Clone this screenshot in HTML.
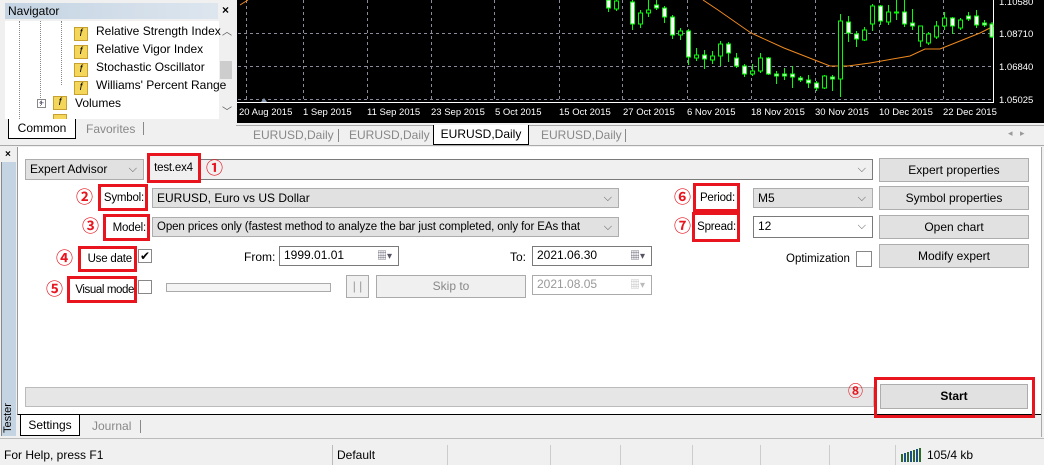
<!DOCTYPE html>
<html><head><meta charset="utf-8"><style>
*{margin:0;padding:0;box-sizing:border-box}
body{width:1044px;height:465px;overflow:hidden;background:#f0f0f0;font-family:"Liberation Sans","Noto Sans CJK JP",sans-serif;font-size:12px;color:#000;position:relative}
.a{position:absolute}
.box{position:absolute;border:1px solid #adadad;background:#e1e1e1}
.btn{position:absolute;border:1px solid #adadad;background:#e1e1e1;text-align:center;line-height:22px;font-size:12px}
.inp{position:absolute;border:1px solid #7a7a7a;background:#fff;padding-left:4px;line-height:17px}
.red{position:absolute;border:3px solid #e8141e;display:flex;align-items:center;justify-content:flex-end;padding-right:1px;font-size:11.5px;letter-spacing:-0.2px;white-space:nowrap}
.num{position:absolute;color:#e8141e;font-size:17px;font-weight:bold;line-height:18px}
.arr{position:absolute;right:6px;top:1px;font-size:11px;color:#555}
.lbl{position:absolute;font-size:12px}
</style></head><body>

<!-- Navigator -->
<div class="a" style="left:0;top:0;width:237px;height:143px;background:#f0f0f0"></div>
<div class="a" style="left:5px;top:3px;width:213px;height:16px;background:linear-gradient(90deg,#c4d3e2,#dde6ef);padding-left:3px;font-size:12px;line-height:16px">Navigator</div>
<div class="a" style="left:222px;top:3px;font-size:12px;font-weight:bold">×</div>
<div class="a" style="left:5px;top:21px;width:227px;height:98px;background:#fff;overflow:hidden;font-size:12px">
 <div class="a" style="left:214px;top:0;width:16px;height:98px;background:#f0f0f0"></div>
 <div class="a" style="left:215px;top:40px;width:14px;height:18px;background:#cdcdcd"></div>
 <div class="a" style="left:217px;top:2px;font-size:10px;color:#555">︿</div>
 <div class="a" style="left:217px;top:82px;font-size:10px;color:#555">﹀</div>
 <div class="a" style="left:14px;top:0;height:98px;border-left:1px dotted #888"></div>
 <div class="a" style="left:35px;top:0;height:85px;border-left:1px dotted #888"></div>
 <div class="a" style="left:56px;top:0;height:64px;border-left:1px dotted #888"></div>
 <div class="a" style="left:69px;top:6px;width:14px;height:14px;background:#f4d65a;border:1px solid #c8a030;font-size:10px;text-align:center;font-style:italic;line-height:12px">f</div>
 <div class="a" style="left:91px;top:3px;white-space:nowrap">Relative Strength Index</div>
 <div class="a" style="left:69px;top:24px;width:14px;height:14px;background:#f4d65a;border:1px solid #c8a030;font-size:10px;text-align:center;font-style:italic;line-height:12px">f</div>
 <div class="a" style="left:91px;top:21px">Relative Vigor Index</div>
 <div class="a" style="left:69px;top:42px;width:14px;height:14px;background:#f4d65a;border:1px solid #c8a030;font-size:10px;text-align:center;font-style:italic;line-height:12px">f</div>
 <div class="a" style="left:91px;top:39px">Stochastic Oscillator</div>
 <div class="a" style="left:69px;top:60px;width:14px;height:14px;background:#f4d65a;border:1px solid #c8a030;font-size:10px;text-align:center;font-style:italic;line-height:12px">f</div>
 <div class="a" style="left:91px;top:57px;white-space:nowrap">Williams' Percent Range</div>
 <div class="a" style="left:32px;top:78px;width:9px;height:9px;border:1px solid #888;font-size:9px;line-height:7px;text-align:center;color:#335">+</div>
 <div class="a" style="left:48px;top:75px;width:14px;height:14px;background:#f4d65a;border:1px solid #c8a030;font-size:10px;text-align:center;font-style:italic;line-height:12px">f</div>
 <div class="a" style="left:70px;top:75px">Volumes</div>
 <div class="a" style="left:48px;top:93px;width:14px;height:14px;background:#f4d65a;border:1px solid #c8a030"></div>
</div>
<div class="a" style="left:8px;top:119px;width:68px;height:20px;background:#fff;border:1px solid #000;border-top:none;text-align:center;line-height:18px">Common</div>
<div class="a" style="left:86px;top:122px;color:#888">Favorites</div>
<div class="a" style="left:143px;top:122px;height:13px;border-left:1px solid #888"></div>

<!-- Chart -->
<svg class="a" style="left:237px;top:0" width="807" height="123" viewBox="237 0 807 123">
<rect x="237" y="0" width="807" height="123" fill="#000"/>
<g stroke="#8a8a9a" stroke-dasharray="3,3" stroke-width="1">
<line x1="238" y1="33.5" x2="993" y2="33.5"/><line x1="238" y1="66.5" x2="993" y2="66.5"/><line x1="238" y1="99.5" x2="993" y2="99.5"/>
<line x1="246.5" y1="0" x2="246.5" y2="102"/><line x1="303.5" y1="0" x2="303.5" y2="102"/><line x1="367.5" y1="0" x2="367.5" y2="102"/><line x1="431.5" y1="0" x2="431.5" y2="102"/><line x1="494.5" y1="0" x2="494.5" y2="102"/><line x1="559.5" y1="0" x2="559.5" y2="102"/><line x1="622.5" y1="0" x2="622.5" y2="102"/><line x1="687.5" y1="0" x2="687.5" y2="102"/><line x1="751.5" y1="0" x2="751.5" y2="102"/><line x1="815.5" y1="0" x2="815.5" y2="102"/><line x1="879.5" y1="0" x2="879.5" y2="102"/><line x1="943.5" y1="0" x2="943.5" y2="102"/>
</g>
<line x1="993.5" y1="0" x2="993.5" y2="103" stroke="#fff"/>
<line x1="237" y1="102.5" x2="994" y2="102.5" stroke="#fff"/>
<polyline fill="none" stroke="#f08a1e" stroke-width="1" points="240,5 248,0"/>
<polyline fill="none" stroke="#f08a1e" stroke-width="1" points="703,0 718,10 751,33 784,48 830,66 848,66 870,63 910,56 925,49 940,49 960,41 980,33 994,26"/>
<g stroke="#00ff00" stroke-width="1">
<line x1="608.5" y1="0" x2="608.5" y2="12"/><rect x="606.5" y="0" width="4" height="8" fill="#fff"/>
<line x1="616.5" y1="0" x2="616.5" y2="11"/><rect x="614.5" y="1" width="4" height="8" fill="#000"/>
<line x1="632.5" y1="0" x2="632.5" y2="30"/><rect x="630.5" y="2" width="4" height="22" fill="#fff"/>
<line x1="640.5" y1="10" x2="640.5" y2="28"/><rect x="638.5" y="13" width="4" height="11" fill="#000"/>
<line x1="648.5" y1="0" x2="648.5" y2="17"/><rect x="646.5" y="10" width="4" height="3" fill="#000"/>
<line x1="656.5" y1="0" x2="656.5" y2="10"/><rect x="654.5" y="5" width="4" height="3" fill="#fff"/>
<line x1="664.5" y1="6" x2="664.5" y2="23"/><rect x="662.5" y="8" width="4" height="9" fill="#fff"/>
<line x1="672.5" y1="15" x2="672.5" y2="39"/><rect x="670.5" y="17" width="4" height="18" fill="#fff"/>
<line x1="680.5" y1="28" x2="680.5" y2="40"/><rect x="678.5" y="31" width="4" height="4" fill="#000"/>
<line x1="688.5" y1="29" x2="688.5" y2="65"/><rect x="686.5" y="31" width="4" height="26" fill="#fff"/>
<line x1="696.5" y1="48" x2="696.5" y2="61"/><rect x="694.5" y="55" width="4" height="3" fill="#000"/>
<line x1="704.5" y1="50" x2="704.5" y2="69"/><rect x="702.5" y="55" width="4" height="4" fill="#fff"/>
<line x1="712.5" y1="51" x2="712.5" y2="64"/><rect x="710.5" y="56" width="4" height="4" fill="#000"/>
<line x1="720.5" y1="41" x2="720.5" y2="66"/><rect x="718.5" y="44" width="4" height="12" fill="#000"/>
<line x1="728.5" y1="42" x2="728.5" y2="62"/><rect x="726.5" y="44" width="4" height="9" fill="#fff"/>
<line x1="736.5" y1="53" x2="736.5" y2="68"/><rect x="734.5" y="58" width="4" height="8" fill="#fff"/>
<line x1="744.5" y1="64" x2="744.5" y2="77"/><rect x="742.5" y="66" width="4" height="8" fill="#fff"/>
<line x1="752.5" y1="64" x2="752.5" y2="76"/><rect x="750.5" y="71" width="4" height="3" fill="#000"/>
<line x1="760.5" y1="53" x2="760.5" y2="73"/><rect x="758.5" y="58" width="4" height="13" fill="#000"/>
<line x1="768.5" y1="57" x2="768.5" y2="75"/><rect x="766.5" y="58" width="4" height="16" fill="#fff"/>
<line x1="776.5" y1="71" x2="776.5" y2="84"/><rect x="774.5" y="74" width="4" height="2" fill="#fff"/>
<line x1="784.5" y1="68" x2="784.5" y2="80"/><rect x="782.5" y="74" width="4" height="2" fill="#fff"/>
<line x1="792.5" y1="66" x2="792.5" y2="88"/><rect x="790.5" y="74" width="4" height="3" fill="#fff"/>
<line x1="800.5" y1="76" x2="800.5" y2="82"/><rect x="798.5" y="78" width="4" height="2" fill="#fff"/>
<line x1="808.5" y1="75" x2="808.5" y2="88"/><rect x="806.5" y="80" width="4" height="3" fill="#fff"/>
<line x1="816.5" y1="81" x2="816.5" y2="91"/><rect x="814.5" y="83" width="4" height="5" fill="#fff"/>
<line x1="824.5" y1="75" x2="824.5" y2="89"/><rect x="822.5" y="76" width="4" height="12" fill="#000"/>
<line x1="832.5" y1="75" x2="832.5" y2="91"/><rect x="830.5" y="77" width="4" height="2" fill="#fff"/>
<line x1="840.5" y1="14" x2="840.5" y2="97"/><rect x="838.5" y="21" width="4" height="58" fill="#000"/>
<line x1="848.5" y1="16" x2="848.5" y2="42"/><rect x="846.5" y="22" width="4" height="11" fill="#fff"/>
<line x1="856.5" y1="31" x2="856.5" y2="47"/><rect x="854.5" y="34" width="4" height="5" fill="#fff"/>
<line x1="864.5" y1="27" x2="864.5" y2="41"/><rect x="862.5" y="30" width="4" height="10" fill="#000"/>
<line x1="872.5" y1="4" x2="872.5" y2="31"/><rect x="870.5" y="6" width="4" height="18" fill="#000"/>
<line x1="880.5" y1="5" x2="880.5" y2="25"/><rect x="878.5" y="6" width="4" height="15" fill="#fff"/>
<line x1="888.5" y1="5" x2="888.5" y2="25"/><rect x="886.5" y="12" width="4" height="10" fill="#000"/>
<line x1="896.5" y1="0" x2="896.5" y2="20"/><rect x="894.5" y="12" width="4" height="1" fill="#fff"/>
<line x1="904.5" y1="0" x2="904.5" y2="27"/><rect x="902.5" y="12" width="4" height="12" fill="#fff"/>
<line x1="912.5" y1="9" x2="912.5" y2="30"/><rect x="910.5" y="23" width="4" height="3" fill="#fff"/>
<line x1="920.5" y1="26" x2="920.5" y2="47"/><rect x="918.5" y="26" width="4" height="15" fill="#000"/>
<line x1="928.5" y1="32" x2="928.5" y2="45"/><rect x="926.5" y="34" width="4" height="9" fill="#000"/>
<line x1="936.5" y1="21" x2="936.5" y2="39"/><rect x="934.5" y="26" width="4" height="11" fill="#000"/>
<line x1="944.5" y1="12" x2="944.5" y2="30"/><rect x="942.5" y="18" width="4" height="8" fill="#000"/>
<line x1="952.5" y1="17" x2="952.5" y2="34"/><rect x="950.5" y="18" width="4" height="8" fill="#fff"/>
<line x1="960.5" y1="18" x2="960.5" y2="30"/><rect x="958.5" y="20" width="4" height="8" fill="#000"/>
<line x1="968.5" y1="12" x2="968.5" y2="21"/><rect x="966.5" y="16" width="4" height="3" fill="#fff"/>
<line x1="976.5" y1="10" x2="976.5" y2="28"/><rect x="974.5" y="16" width="4" height="9" fill="#fff"/>
<line x1="984.5" y1="20" x2="984.5" y2="27"/><rect x="982.5" y="23" width="4" height="2" fill="#fff"/>
<line x1="992" y1="22" x2="992" y2="38"/><rect x="990" y="24" width="3" height="13" fill="#fff"/>
</g>
<g fill="#fff" font-family="Liberation Sans, sans-serif" font-size="9.5">
<text x="999" y="5">1.10580</text><text x="999" y="37">1.08710</text><text x="999" y="70">1.06840</text><text x="999" y="103">1.05025</text>
<text x="239" y="115">20 Aug 2015</text><text x="303" y="115">1 Sep 2015</text><text x="367" y="115">11 Sep 2015</text><text x="431" y="115">23 Sep 2015</text><text x="495" y="115">5 Oct 2015</text><text x="559" y="115">15 Oct 2015</text><text x="623" y="115">27 Oct 2015</text><text x="687" y="115">6 Nov 2015</text><text x="751" y="115">18 Nov 2015</text><text x="815" y="115">30 Nov 2015</text><text x="879" y="115">10 Dec 2015</text><text x="943" y="115">22 Dec 2015</text>
</g>
<polygon points="261,102 264,98 267,102" fill="#8a9ab0"/>
</svg>

<!-- chart tabs -->
<div class="a" style="left:236px;top:125px;width:808px;height:19px;background:#f0f0f0;border-top:1px solid #aaa"></div>
<div class="a" style="left:253px;top:128px;color:#888">EURUSD,Daily</div>
<div class="a" style="left:338px;top:129px;height:13px;border-left:1px solid #888"></div>
<div class="a" style="left:349px;top:128px;color:#888">EURUSD,Daily</div>
<div class="a" style="left:433px;top:125px;width:96px;height:20px;background:#fff;border:1px solid #000;border-top:none;text-align:center;line-height:19px">EURUSD,Daily</div>
<div class="a" style="left:541px;top:128px;color:#888">EURUSD,Daily</div>
<div class="a" style="left:625px;top:129px;height:13px;border-left:1px solid #888"></div>
<div class="a" style="left:1008px;top:128px;color:#999;font-size:9px">◂ &nbsp; ▸</div>

<!-- Tester panel -->
<div class="a" style="left:0;top:145px;width:1044px;height:2px;border-top:1px solid #aaa"></div>
<div class="a" style="left:5px;top:149px;font-size:10px;font-weight:bold">×</div>
<div class="a" style="left:1px;top:162px;width:15px;height:274px;background:#c5d4e2;border-left:1px solid #888"></div>
<div class="a" style="left:1px;top:400px;width:15px;height:36px;font-size:11px;writing-mode:vertical-rl;transform:rotate(180deg);line-height:15px;text-align:center">Tester</div>
<div class="a" style="left:17px;top:147px;width:1024px;height:268px;background:#fff;border-left:1px solid #999;border-bottom:1px solid #000"></div>
<div class="a" style="left:1041px;top:147px;width:3px;height:290px;border-left:1px solid #aaa"></div>

<div class="box" style="left:25px;top:159px;width:119px;height:21px;padding-left:4px;line-height:19px">Expert Advisor<span class="arr" style="top:0">⌵</span></div>
<div class="inp" style="left:148px;top:159px;width:725px;height:21px;background:#f0f0f0;border-color:#7a7a7a;line-height:19px">&nbsp;<span class="arr" style="top:0">⌵</span></div>
<div class="red" style="left:147px;top:153px;width:54px;height:30px;background:#f0f0f0;justify-content:center">test.ex4</div>
<div class="num" style="left:206px;top:160px">①</div>

<div class="red" style="left:98px;top:184px;width:50px;height:27px">Symbol:</div>
<div class="num" style="left:76px;top:189px">②</div>
<div class="box" style="left:152px;top:188px;width:467px;height:20px;padding-left:4px;line-height:18px">EURUSD, Euro vs US Dollar<span class="arr" style="top:0">⌵</span></div>

<div class="red" style="left:103px;top:214px;width:47px;height:27px">Model:</div>
<div class="num" style="left:82px;top:218px">③</div>
<div class="box" style="left:152px;top:217px;width:467px;height:20px;padding-left:4px;line-height:18px;white-space:nowrap;overflow:hidden;font-size:11.5px;letter-spacing:-0.1px">Open prices only (fastest method to analyze the bar just completed, only for EAs that<span class="arr" style="top:0;background:#e1e1e1;padding-left:3px;right:0;padding-right:6px">⌵</span></div>

<div class="red" style="left:78px;top:246px;width:59px;height:26px;padding-right:2px">Use date</div>
<div class="num" style="left:56px;top:250px">④</div>
<div class="a" style="left:138px;top:249px;width:14px;height:14px;border:1px solid #888;font-size:12px;line-height:12px;text-align:center">✔</div>
<div class="lbl" style="left:244px;top:250px">From:</div>
<div class="inp" style="left:279px;top:246px;width:120px;height:20px">1999.01.01<span class="arr" style="color:#556;font-size:10px">▦▾</span></div>
<div class="lbl" style="left:510px;top:250px">To:</div>
<div class="inp" style="left:532px;top:246px;width:120px;height:20px">2021.06.30<span class="arr" style="color:#556;font-size:10px">▦▾</span></div>

<div class="red" style="left:67px;top:276px;width:70px;height:27px;font-size:11.5px;letter-spacing:-0.4px;padding-right:0">Visual mode</div>
<div class="num" style="left:46px;top:281px">⑤</div>
<div class="a" style="left:138px;top:280px;width:14px;height:14px;border:1px solid #888"></div>
<div class="a" style="left:166px;top:283px;width:165px;height:9px;border:1px solid #aaa;background:#f4f4f4"></div>
<div class="a" style="left:346px;top:275px;width:23px;height:23px;border:1px solid #aaa;background:#f0f0f0;color:#999;text-align:center;line-height:20px">| |</div>
<div class="a" style="left:376px;top:275px;width:150px;height:23px;border:1px solid #aaa;background:#f0f0f0;color:#888;text-align:center;line-height:21px">Skip to</div>
<div class="inp" style="left:532px;top:275px;width:120px;height:20px;border-color:#aaa;color:#999">2021.08.05<span class="arr" style="color:#bbb;font-size:10px">▦▾</span></div>

<div class="red" style="left:693px;top:183px;width:47px;height:29px;padding-right:2px">Period:</div>
<div class="num" style="left:674px;top:189px">⑥</div>
<div class="box" style="left:753px;top:188px;width:120px;height:20px;padding-left:4px;line-height:18px">M5<span class="arr" style="top:0">⌵</span></div>
<div class="red" style="left:692px;top:212px;width:48px;height:30px;padding-right:1px">Spread:</div>
<div class="num" style="left:674px;top:218px">⑦</div>
<div class="inp" style="left:753px;top:216px;width:120px;height:22px;line-height:19px">12<span class="arr" style="top:0">⌵</span></div>
<div class="lbl" style="left:786px;top:253px;font-size:11.5px">Optimization</div>
<div class="a" style="left:856px;top:251px;width:16px;height:16px;border:1px solid #888;background:#fff"></div>

<div class="btn" style="left:879px;top:158px;width:150px;height:24px">Expert properties</div>
<div class="btn" style="left:879px;top:186px;width:150px;height:24px">Symbol properties</div>
<div class="btn" style="left:879px;top:215px;width:150px;height:24px">Open chart</div>
<div class="btn" style="left:879px;top:244px;width:150px;height:24px">Modify expert</div>

<div class="a" style="left:25px;top:387px;width:849px;height:20px;border:1px solid #bbb;background:#e6e6e6"></div>
<div class="num" style="left:848px;top:383px;font-size:15px">⑧</div>
<div class="btn" style="left:880px;top:384px;width:148px;height:25px;font-weight:bold;line-height:23px">Start</div>
<div class="red" style="left:874px;top:377px;width:161px;height:41px"></div>

<div class="a" style="left:20px;top:415px;width:60px;height:21px;background:#fff;border:1px solid #000;border-top:none;text-align:center;line-height:20px">Settings</div>
<div class="a" style="left:92px;top:419px;color:#888">Journal</div>
<div class="a" style="left:140px;top:420px;height:13px;border-left:1px solid #888"></div>

<!-- status bar -->
<div class="a" style="left:0;top:438px;width:1044px;height:27px;background:#f0f0f0;border-top:1px solid #bbb"></div>
<div class="a" style="left:4px;top:448px">For Help, press F1</div>
<div class="a" style="left:332px;top:445px;height:20px;border-left:1px solid #bbb"></div>
<div class="a" style="left:337px;top:448px">Default</div>
<div class="a" style="left:447px;top:445px;height:20px;border-left:1px solid #ccc"></div>
<div class="a" style="left:550px;top:445px;height:20px;border-left:1px solid #ccc"></div>
<div class="a" style="left:620px;top:445px;height:20px;border-left:1px solid #ccc"></div>
<div class="a" style="left:692px;top:445px;height:20px;border-left:1px solid #ccc"></div>
<div class="a" style="left:760px;top:445px;height:20px;border-left:1px solid #ccc"></div>
<div class="a" style="left:829px;top:445px;height:20px;border-left:1px solid #ccc"></div>
<div class="a" style="left:895px;top:445px;height:20px;border-left:1px solid #ccc"></div>
<svg class="a" style="left:901px;top:448px" width="24" height="14"><g fill="#2a6b2a"><rect x="0" y="6" width="2" height="8"/><rect x="3" y="5" width="2" height="9" fill="#1f4f8a"/><rect x="6" y="4" width="2" height="10"/><rect x="9" y="3" width="2" height="11" fill="#1f4f8a"/><rect x="12" y="2" width="2" height="12"/><rect x="15" y="1" width="2" height="13" fill="#1f4f8a"/><rect x="18" y="0" width="2" height="14"/></g></svg>
<div class="a" style="left:927px;top:448px">105/4 kb</div>
</body></html>
